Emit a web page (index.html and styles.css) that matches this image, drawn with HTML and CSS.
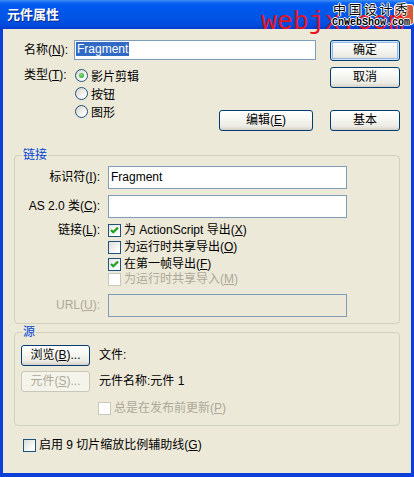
FILE: index.html
```html
<!DOCTYPE html>
<html lang="zh-CN">
<head>
  <meta charset="UTF-8">
  <title>元件属性</title>
  <link rel="stylesheet" href="styles.css">
</head>
<body>
  <div class="window">
    <div class="titlebar">元件属性</div>
    <div class="closebtn"></div>
    <div class="mark-red">webjx.com</div>
    <div class="mark-cn">中国设计秀</div>
    <div class="mark-en">CnWebShow.com</div>

    <div class="client">
      <div class="top">
        <div class="label name-label">名称(<u>N</u>):</div>
        <div class="field name-field"><span class="selected">Fragment</span></div>
        <div class="btn default">确定</div>

        <div class="label type-label">类型(<u>T</u>):</div>
        <div class="type-cell">
          <div class="radios">
            <div class="radio-item"><span class="radio checked"></span><span>影片剪辑</span></div>
            <div class="radio-item"><span class="radio"></span><span>按钮</span></div>
            <div class="radio-item"><span class="radio"></span><span>图形</span></div>
          </div>
          <div class="btn edit-btn">编辑(<u>E</u>)</div>
        </div>
        <div class="btn-col">
          <div class="btn">取消</div>
          <div class="btn">基本</div>
        </div>
      </div>

      <div class="group link-group">
        <div class="group-title">链接</div>
        <div class="link-grid">
          <div class="row-label">标识符(<u>I</u>):</div>
          <div class="field text-field">Fragment</div>

          <div class="row-label">AS 2.0 类(<u>C</u>):</div>
          <div class="field text-field"></div>

          <div class="row-label check-label">链接(<u>L</u>):</div>
          <div class="checks">
            <div class="check-item"><span class="check on"><svg width="11" height="11" viewBox="0 0 11 11"><path d="M2 5 L4.2 7.3 L9 2.6" fill="none" stroke="#21a121" stroke-width="2.2"/></svg></span><span>为 ActionScript 导出(<u>X</u>)</span></div>
            <div class="check-item"><span class="check"></span><span>为运行时共享导出(<u>O</u>)</span></div>
            <div class="check-item short"><span class="check on"><svg width="11" height="11" viewBox="0 0 11 11"><path d="M2 5 L4.2 7.3 L9 2.6" fill="none" stroke="#21a121" stroke-width="2.2"/></svg></span><span>在第一帧导出(<u>F</u>)</span></div>
            <div class="check-item short disabled"><span class="check off"></span><span>为运行时共享导入(<u>M</u>)</span></div>
          </div>

          <div class="row-label disabled">URL(<u>U</u>):</div>
          <div class="field text-field off-field"></div>
        </div>
      </div>

      <div class="group source-group">
        <div class="group-title">源</div>
        <div class="source-grid">
          <div class="btn">浏览(<u>B</u>)...</div>
          <div class="info">文件:</div>
          <div class="btn off-btn">元件(<u>S</u>)...</div>
          <div class="info">元件名称:元件 1</div>
          <div class="check-item disabled update-item"><span class="check off"></span><span>总是在发布前更新(<u>P</u>)</span></div>
        </div>
      </div>

      <div class="check-item scale-item"><span class="check"></span><span>启用 9 切片缩放比例辅助线(<u>G</u>)</span></div>
    </div>
  </div>
</body>
</html>
```

FILE: styles.css
```css
body {
  margin: 0;
  font-family: "Liberation Sans", "Noto Sans CJK SC", sans-serif;
  font-size: 12px;
  color: #000;
  background: #fff;
}
u { text-decoration: underline; }

.window {
  position: relative;
  width: 414px;
  height: 477px;
  background: #0a3fd8;
  overflow: hidden;
}
.titlebar {
  height: 29px;
  padding-left: 7px;
  line-height: 30px;
  font-size: 13px;
  font-weight: bold;
  color: #fff;
  text-shadow: 1px 1px 0 #0b2a8c;
  background: linear-gradient(to bottom, #3d8ff7 0, #0d62f0 3px, #0058ee 6px, #0055e5 60%, #004ade 88%, #0039cc 100%);
}
.closebtn {
  position: absolute;
  left: 394px;
  top: 4px;
  width: 18px;
  height: 19px;
  border: 1px solid #fff;
  border-radius: 3px;
  background: #d9583a;
}
.mark-red {
  position: absolute;
  left: 261px;
  top: 7px;
  font-family: "Liberation Mono", monospace;
  font-size: 26.5px;
  line-height: 30px;
  color: #e8141c;
}
.mark-cn {
  position: absolute;
  left: 333px;
  top: 1px;
  font-size: 13px;
  line-height: 17px;
  letter-spacing: 2.5px;
  color: #000;
  text-shadow: 1px 0 #fff, -1px 0 #fff, 0 1px #fff, 0 -1px #fff;
}
.mark-en {
  position: absolute;
  left: 332px;
  top: 17px;
  font-family: "Liberation Mono", monospace;
  font-size: 10px;
  font-weight: bold;
  line-height: 11px;
  color: #000;
  text-shadow: 1px 0 #fff, -1px 0 #fff, 0 1px #fff, 0 -1px #fff;
}

.client {
  margin: 0 3px;
  height: 444px;
  box-sizing: border-box;
  padding: 11px 11px 0 11px;
  background: #ece9d8;
  display: flex;
  flex-direction: column;
}

/* top part */
.top {
  display: grid;
  grid-template-columns: 60px 242px 1fr;
  grid-template-rows: 21px 64px;
  row-gap: 6px;
}
.top > .btn,
.btn-col {
  justify-self: end;
  width: 70px;
}
.label {
  padding-left: 10px;
  white-space: nowrap;
}
.name-label { line-height: 20px; }
.type-label { line-height: 18px; margin-top: -1px; }
.field {
  box-sizing: border-box;
  border: 1px solid #7f9db9;
  background: #fff;
}
.name-field {
  height: 20px;
  padding: 1px;
}
.selected {
  display: inline-block;
  height: 14px;
  line-height: 14px;
  padding: 0 1px;
  background: #316ac5;
  color: #fff;
}
.type-cell {
  display: flex;
  justify-content: space-between;
}
.radios {
  margin-top: -1px;
  margin-left: 1px;
}
.radio-item {
  display: flex;
  align-items: center;
  gap: 3px;
  height: 18px;
}
.radio {
  position: relative;
  width: 13px;
  height: 13px;
  box-sizing: border-box;
  border: 1px solid #1c5180;
  border-radius: 50%;
  background: linear-gradient(135deg, #d6d3c7, #fff 80%);
}
.radio.checked::after {
  content: "";
  position: absolute;
  left: 3px;
  top: 3px;
  width: 5px;
  height: 5px;
  border-radius: 50%;
  background: radial-gradient(circle at 40% 40%, #7be07b, #21a121);
}
.edit-btn {
  align-self: flex-end;
  width: 94px;
  margin-right: 3px;
}
.btn-col {
  display: flex;
  flex-direction: column;
  justify-content: space-between;
}

.btn {
  box-sizing: border-box;
  height: 21px;
  line-height: 19px;
  text-align: center;
  border: 1px solid #003c74;
  border-radius: 3px;
  background: linear-gradient(to bottom, #fff 0, #f7f7f3 40%, #ecebe4 80%, #d6d0c5 100%);
  white-space: nowrap;
}
.btn.default {
  box-shadow: inset 0 0 0 1px #cee7ff, inset 0 0 0 2px #98b8ea;
}
.off-btn {
  border-color: #c9c7ba;
  color: #aca899;
  background: #f5f4ea;
}

/* group boxes */
.group {
  position: relative;
  border: 1px solid #d0d0bf;
  border-radius: 4px;
}
.group-title {
  position: absolute;
  left: 7px;
  top: -8px;
  padding: 0 1px;
  line-height: 14px;
  color: #0046d5;
  background: #ece9d8;
}
.link-group {
  margin-top: 24px;
}
.link-grid {
  display: grid;
  grid-template-columns: 85px 239px;
  column-gap: 8px;
  row-gap: 6px;
  padding: 10px 0 6px 0;
}
.row-label {
  text-align: right;
  line-height: 23px;
  white-space: nowrap;
}
.row-label.check-label { line-height: 13px; }
.text-field {
  height: 23px;
  padding-left: 2px;
  line-height: 21px;
}
.off-field {
  background: #ece9d8;
}
.disabled { color: #aca899; }

.check-item {
  display: flex;
  align-items: flex-start;
  gap: 3px;
  height: 17px;
  line-height: 13px;
  white-space: nowrap;
}
.check-item.short { height: 15px; }
.check {
  width: 13px;
  height: 13px;
  box-sizing: border-box;
  border: 1px solid #1c5180;
  background: linear-gradient(135deg, #dcdcd7, #fff 85%);
  flex-shrink: 0;
}
.check svg { display: block; }
.check.on { background: linear-gradient(135deg, #e4e4df, #fff 70%); }
.check.off {
  border-color: #cac8bb;
  background: #fff;
}

.source-group {
  margin-top: 8px;
}
.source-grid {
  display: grid;
  grid-template-columns: 69px 1fr;
  column-gap: 9px;
  row-gap: 5px;
  padding: 12px 0 10px 6px;
}
.info {
  line-height: 21px;
}
.update-item {
  grid-column: 2;
  height: 13px;
  margin-top: 5px;
  margin-left: -1px;
}
.scale-item {
  margin-top: 13px;
  margin-left: 9px;
}
```
